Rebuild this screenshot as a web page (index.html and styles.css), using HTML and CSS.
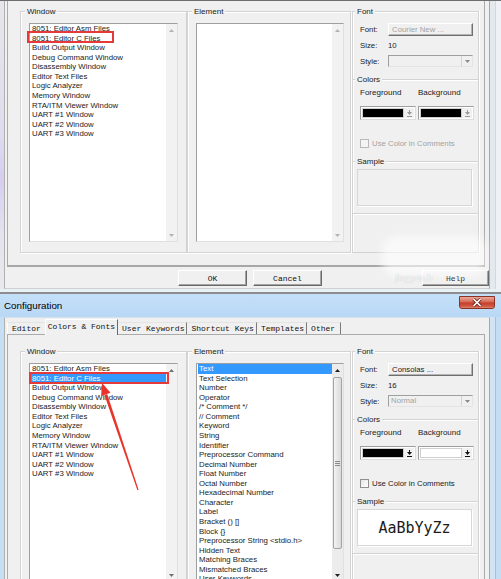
FILE: index.html
```html
<!DOCTYPE html>
<html>
<head>
<meta charset="utf-8">
<title>Configuration</title>
<link rel="stylesheet" href="styles.css">
</head>
<body>
<div class="screen">

  <section class="dlg-top">
    <div class="frame-l"></div>
    <div class="body">
      <div class="tabpage tabpage-top">
        <div class="cols">
          <div class="group">
            <div class="gtitle">Window</div>
            <div class="listbox">
              <div class="items">
                <div class="item">8051: Editor Asm Files</div>
                <div class="item">8051: Editor C Files</div>
                <div class="item">Build Output Window</div>
                <div class="item">Debug Command Window</div>
                <div class="item">Disassembly Window</div>
                <div class="item">Editor Text Files</div>
                <div class="item">Logic Analyzer</div>
                <div class="item">Memory Window</div>
                <div class="item">RTA/ITM Viewer Window</div>
                <div class="item">UART #1 Window</div>
                <div class="item">UART #2 Window</div>
                <div class="item">UART #3 Window</div>
              </div>
              <div class="vs dis">
                <div class="sbtn"><svg width="5" height="3" viewBox="0 0 5 3"><path d="M0 3L2.5 0L5 3Z"/></svg></div>
                <div class="track"></div>
                <div class="sbtn"><svg width="5" height="3" viewBox="0 0 5 3"><path d="M0 0H5L2.5 3Z"/></svg></div>
              </div>
            </div>
          </div>
          <div class="group group-el">
            <div class="gtitle">Element</div>
            <div class="listbox">
              <div class="items"></div>
              <div class="vs dis">
                <div class="sbtn"><svg width="5" height="3" viewBox="0 0 5 3"><path d="M0 3L2.5 0L5 3Z"/></svg></div>
                <div class="track"></div>
                <div class="sbtn"><svg width="5" height="3" viewBox="0 0 5 3"><path d="M0 0H5L2.5 3Z"/></svg></div>
              </div>
            </div>
          </div>
          <div class="fontcol">
            <div class="fsec">
              <div class="gtitle">Font</div>
              <div class="frows">
                <span>Font:</span><div class="fbtn dim">Courier New ...</div>
                <span>Size:</span><span>10</span>
                <span>Style:</span><div class="fcombo"><span class="fval"></span><span class="dd"><svg width="5" height="3" viewBox="0 0 5 3"><path d="M0 0H5L2.5 3Z"/></svg></span></div>
              </div>
            </div>
            <div class="fsec">
              <div class="gtitle">Colors</div>
              <div class="pair clabels"><span>Foreground</span><span>Background</span></div>
              <div class="pair ccombos">
                <div class="ccombo dis"><span class="swatch black"></span><span class="cdd"><svg width="5" height="7" viewBox="0 0 5 7"><path d="M2 0H3V2H5L2.5 5L0 2H2Z M0 6H5V7H0Z"/></svg></span></div>
                <div class="ccombo dis"><span class="swatch black"></span><span class="cdd"><svg width="5" height="7" viewBox="0 0 5 7"><path d="M2 0H3V2H5L2.5 5L0 2H2Z M0 6H5V7H0Z"/></svg></span></div>
              </div>
              <div class="check dis"><span class="cbox"></span><span>Use Color in Comments</span></div>
            </div>
            <div class="fsec">
              <div class="gtitle">Sample</div>
              <div class="sample"></div>
            </div>
            <div class="fsec end"></div>
          </div>
        </div>
      </div>
      <div class="buttons">
        <div class="btn">OK</div>
        <div class="btn">Cancel</div>
        <div class="btn help">Help</div>
      </div>
    </div>
    <div class="frame-r"></div>
  </section>

  <div class="sep"></div>

  <section class="dlg-bottom">
    <div class="titlebar">
      <span class="ttl">Configuration</span>
      <span class="close"><svg width="12" height="9" viewBox="0 0 12 9"><path d="M2.5 1L9.5 8M9.5 1L2.5 8" stroke="#6b2419" stroke-width="3.2"/><path d="M2.5 1L9.5 8M9.5 1L2.5 8" stroke="#fff" stroke-width="1.7"/></svg></span>
    </div>
    <div class="dlg-row">
      <div class="frame-l"></div>
      <div class="body">
        <div class="tabs">
          <span class="tab first">Editor</span>
          <span class="tab sel">Colors &amp; Fonts</span>
          <span class="tab">User Keywords</span>
          <span class="tab">Shortcut Keys</span>
          <span class="tab">Templates</span>
          <span class="tab last">Other</span>
        </div>
        <div class="tabpage tabpage-main">
          <div class="cols">
            <div class="group">
              <div class="gtitle">Window</div>
              <div class="listbox">
                <div class="items">
                  <div class="item">8051: Editor Asm Files</div>
                  <div class="item sel">8051: Editor C Files</div>
                  <div class="item">Build Output Window</div>
                  <div class="item">Debug Command Window</div>
                  <div class="item">Disassembly Window</div>
                  <div class="item">Editor Text Files</div>
                  <div class="item">Logic Analyzer</div>
                  <div class="item">Memory Window</div>
                  <div class="item">RTA/ITM Viewer Window</div>
                  <div class="item">UART #1 Window</div>
                  <div class="item">UART #2 Window</div>
                  <div class="item">UART #3 Window</div>
                </div>
                <div class="vs mid">
                  <div class="sbtn"><svg width="5" height="3" viewBox="0 0 5 3"><path d="M0 3L2.5 0L5 3Z"/></svg></div>
                  <div class="track"></div>
                  <div class="sbtn"><svg width="5" height="3" viewBox="0 0 5 3"><path d="M0 0H5L2.5 3Z"/></svg></div>
                </div>
              </div>
            </div>
            <div class="group group-el">
              <div class="gtitle">Element</div>
              <div class="listbox">
                <div class="items">
                  <div class="item sel">Text</div>
                  <div class="item">Text Selection</div>
                  <div class="item">Number</div>
                  <div class="item">Operator</div>
                  <div class="item">/* Comment */</div>
                  <div class="item">// Comment</div>
                  <div class="item">Keyword</div>
                  <div class="item">String</div>
                  <div class="item">Identifier</div>
                  <div class="item">Preprocessor Command</div>
                  <div class="item">Decimal Number</div>
                  <div class="item">Float Number</div>
                  <div class="item">Octal Number</div>
                  <div class="item">Hexadecimal Number</div>
                  <div class="item">Character</div>
                  <div class="item">Label</div>
                  <div class="item">Bracket () []</div>
                  <div class="item">Block {}</div>
                  <div class="item">Preprocessor String &lt;stdio.h&gt;</div>
                  <div class="item">Hidden Text</div>
                  <div class="item">Matching Braces</div>
                  <div class="item">Mismatched Braces</div>
                  <div class="item">User Keywords</div>
                </div>
                <div class="vs on">
                  <div class="sbtn"><svg width="5" height="3" viewBox="0 0 5 3"><path d="M0 3L2.5 0L5 3Z"/></svg></div>
                  <div class="track"><div class="thumb"><span class="grip"></span></div></div>
                  <div class="sbtn"><svg width="5" height="3" viewBox="0 0 5 3"><path d="M0 0H5L2.5 3Z"/></svg></div>
                </div>
              </div>
            </div>
            <div class="fontcol">
              <div class="fsec">
                <div class="gtitle">Font</div>
                <div class="frows">
                  <span>Font:</span><div class="fbtn">Consolas ...</div>
                  <span>Size:</span><span>16</span>
                  <span>Style:</span><div class="fcombo"><span class="fval dim">Normal</span><span class="dd"><svg width="5" height="3" viewBox="0 0 5 3"><path d="M0 0H5L2.5 3Z"/></svg></span></div>
                </div>
              </div>
              <div class="fsec">
                <div class="gtitle">Colors</div>
                <div class="pair clabels"><span>Foreground</span><span>Background</span></div>
                <div class="pair ccombos">
                  <div class="ccombo"><span class="swatch black"></span><span class="cdd"><svg width="5" height="7" viewBox="0 0 5 7"><path d="M2 0H3V2H5L2.5 5L0 2H2Z M0 6H5V7H0Z"/></svg></span></div>
                  <div class="ccombo"><span class="swatch white"></span><span class="cdd"><svg width="5" height="7" viewBox="0 0 5 7"><path d="M2 0H3V2H5L2.5 5L0 2H2Z M0 6H5V7H0Z"/></svg></span></div>
                </div>
                <div class="check"><span class="cbox"></span><span>Use Color in Comments</span></div>
              </div>
              <div class="fsec">
                <div class="gtitle">Sample</div>
                <div class="sample on">AaBbYyZz</div>
              </div>
              <div class="fsec end"></div>
            </div>
          </div>
        </div>
      </div>
      <div class="frame-r"></div>
    </div>
  </section>

  <div class="redbox rb1"></div>
  <div class="redbox rb2"></div>
  <svg class="annot" width="501" height="579" viewBox="0 0 501 579">
    <polygon points="102,383 110.5,392.8 101.1,396" fill="#e8352c"/>
    <polygon points="104.4,394.9 107.2,393.9 138.6,489.8 137.4,490.2" fill="#e8352c"/>
  </svg>
  <div class="wm"></div>
  <div class="wmtext">jingyan.b</div>
</div>
</body>
</html>
```

FILE: styles.css
```css
* { box-sizing: border-box; }
html, body { margin: 0; padding: 0; }
body {
  width: 501px;
  height: 579px;
  overflow: hidden;
  background: #f0f0f0;
  font-family: "Liberation Sans", Arial, sans-serif;
  font-size: 7.8px;
  color: #1b1b1b;
}
.screen {
  position: relative;
  width: 501px;
  height: 579px;
  overflow: hidden;
  display: flex;
  flex-direction: column;
}

/* ---------- dialog frames ---------- */
.dlg-top {
  flex: none;
  height: 289px;
  border-top: 1px solid #6e6e6e;
  display: flex;
}
.frame-l { width: 4px; flex: none; }
.frame-r { width: 11px; flex: none; }
.dlg-top .frame-l { background: linear-gradient(#e7e6ea, #e0dcef 45%, #d6cdef 62%, #e4e2ee 80%, #e9e9ec); }
.dlg-top .frame-r { background: linear-gradient(to right, #e4e9ed 0 5px, #ccd8e3 5px 6px, #eef2f6 6px); }
.body {
  width: 486px;
  flex: none;
  border-left: 1px solid #b0b0b0;
  border-right: 1px solid #a8a8a8;
  padding-left: 2px;
  background: #f0f0f0;
}
.dlg-top .body { border-bottom: 1px solid #cfcfcf; }

.sep {
  flex: none;
  height: 5px;
  background: linear-gradient(#e8f1f5 0 3px, #8d8d8d 3px 5px);
}

.dlg-bottom {
  flex: 1;
  min-height: 0;
  display: flex;
  flex-direction: column;
}
.titlebar {
  flex: none;
  height: 23px;
  padding-left: 4px;
  display: flex;
  justify-content: space-between;
  align-items: flex-start;
  background: linear-gradient(#c4e0f9, #b9d8f5);
}
.ttl { font-size: 9.8px; line-height: 23px; color: #000; }
.close {
  width: 36px;
  height: 13px;
  margin: 2px 6px 0 0;
  border: 1px solid #8a3024;
  border-radius: 0 0 3px 3px;
  background: linear-gradient(#eaa898, #d9705c 40%, #c43f2c 55%, #cf5a44 85%, #e08a72);
  display: flex;
  align-items: center;
  justify-content: center;
}
.dlg-row { flex: 1; min-height: 0; display: flex; }
.dlg-row .frame-l { background: #c7dff5; }
.dlg-row .frame-r { background: linear-gradient(to right, #d2e4f4 0 5px, #9fc2e4 5px 6px, #c5ddf3 6px); }
.dlg-row .body { border-top: 1px solid #d6e2ed; }

/* ---------- tabs ---------- */
.tabs {
  height: 16px;
  display: flex;
  align-items: flex-end;
  font-family: "Liberation Mono", "Courier New", monospace;
  font-size: 8px;
  color: #111;
}
.tab {
  height: 12px;
  line-height: 11px;
  padding: 0 2px 0 4px;
  border-top: 1px solid #e4e4e4;
  border-right: 1px solid #7a7a7a;
  white-space: nowrap;
}
.tab.first { border-left: 1px solid #ffffff; padding: 0 4px 0 4px; border-right: none; }
.tab.last { padding-right: 5px; }
.tab.sel {
  position: relative;
  z-index: 1;
  height: 16px;
  line-height: 13px;
  margin-bottom: -1px;
  padding: 0 2px;
  background: #f0f0f0;
  border-left: 1px solid #ffffff;
  border-top: 1px solid #ffffff;
  border-right: 1px solid #6a6a6a;
}

/* ---------- tab page ---------- */
.tabpage {
  width: 478px;
  padding-left: 12px;
  border-left: 1px solid #ababab;
  border-right: 1px solid #ababab;
}
.tabpage-top {
  padding-top: 10px;
  padding-bottom: 12px;
  border-bottom: 2px solid #a7a7a7;
}
.tabpage-main {
  border-top: 1px solid #ababab;
  padding-top: 16px;
}
.cols {
  display: grid;
  grid-template-columns: 167px 164px 128px;
  height: 242px;
}

/* ---------- group boxes ---------- */
.group {
  border: 1px solid #d3d3d3;
  box-shadow: inset 1px 1px 0 #ffffff, 1px 1px 0 #ffffff;
  padding: 0 0 10px 8px;
}
.gtitle {
  width: max-content;
  height: 11px;
  line-height: 11px;
  margin: -6px 0 0 -4px;
  padding: 0 2px;
  background: #f0f0f0;
  font-size: 8px;
}

/* ---------- listbox ---------- */
.listbox {
  margin-top: 6px;
  width: 149px;
  height: 219px;
  display: flex;
  background: #ffffff;
  border: 1px solid #9f9f9f;
  border-right-color: #e0e0e0;
  border-bottom-color: #e0e0e0;
  overflow: hidden;
}
.group-el .listbox { width: 148px; }
.items { flex: 1; min-width: 0; padding-left: 1px; }
.item {
  height: 9.57px;
  line-height: 9.57px;
  padding-left: 1px;
  white-space: nowrap;
  overflow: hidden;
}
.item.sel { background: #3399ff; color: #ffffff; }
.vs {
  width: 11px;
  flex: none;
  display: flex;
  flex-direction: column;
  background: #f2f2f2;
}
.vs.dis { color: #b3b3b3; }
.vs.mid { color: #707070; }
.vs.on { color: #1e1e1e; background: #ececec; }
.sbtn { height: 12px; flex: none; display: flex; align-items: center; justify-content: center; }
.sbtn svg { fill: currentColor; display: block; }
.track { flex: 1; }
.thumb {
  margin: 1px 1px 0 1px;
  height: 172px;
  border: 1px solid #a4a4a4;
  border-radius: 2px;
  background: linear-gradient(to right, #f3f3f3, #dadada);
  display: flex;
  align-items: center;
  justify-content: center;
}
.grip {
  width: 5px;
  height: 5px;
  background: repeating-linear-gradient(#8a8a8a 0 1px, transparent 1px 2px);
}

/* ---------- font column ---------- */
.fontcol {
  margin-left: 1px;
  border-left: 1px solid #d3d3d3;
  border-right: 1px solid #d3d3d3;
  box-shadow: inset 1px 0 0 #ffffff, 1px 0 0 #ffffff;
  display: flex;
  flex-direction: column;
}
.fsec {
  border-top: 1px solid #d3d3d3;
  box-shadow: inset 0 1px 0 #ffffff;
  padding-left: 7px;
}
.fsec .gtitle { margin-left: -5px; }
.fsec.end { flex: 1; border-bottom: 1px solid #d3d3d3; }
.frows {
  display: grid;
  grid-template-columns: 28px 85px;
  grid-auto-rows: 16px;
  align-items: center;
  margin: 4px 0 10px 0;
  font-size: 7.8px;
}
.dim { color: #a3a3a3; }
.fbtn {
  height: 13px;
  line-height: 11px;
  padding-left: 3px;
  border: 1px solid;
  border-color: #ffffff #6f6f6f #6f6f6f #ffffff;
  box-shadow: inset -1px -1px 0 #b4b4b4;
  white-space: nowrap;
}
.fcombo {
  height: 12px;
  display: flex;
  border: 1px solid #9f9f9f;
  border-right-color: #e4e4e4;
  border-bottom-color: #e4e4e4;
  background: #f0f0f0;
}
.fval { flex: 1; line-height: 10px; padding-left: 2px; }
.dd {
  width: 11px;
  display: flex;
  align-items: center;
  justify-content: center;
  border-left: 1px solid #d4d4d4;
  color: #8a8a8a;
}
.dd svg { fill: currentColor; display: block; }
.pair {
  display: grid;
  grid-template-columns: 56px 56px;
  column-gap: 2px;
}
.clabels { margin-top: 3px; height: 10px; line-height: 10px; font-size: 8px; }
.ccombos { margin-top: 8px; height: 14px; }
.ccombo {
  display: flex;
  padding: 1px;
  border: 1px solid #9f9f9f;
  border-right-color: #dcdcdc;
  border-bottom-color: #dcdcdc;
  background: #ffffff;
}
.swatch { width: 42px; flex: none; border: 1px solid #d0d0d0; }
.swatch.black { background: #000000; }
.swatch.white { background: #ffffff; }
.cdd {
  flex: 1;
  display: flex;
  align-items: center;
  justify-content: center;
  background: #f0f0f0;
  color: #111;
}
.ccombo.dis .cdd { color: #9a9a9a; }
.cdd svg { fill: currentColor; display: block; }
.check {
  margin: 18px 0 12px 0;
  height: 11px;
  display: flex;
  align-items: center;
  gap: 3px;
}
.check.dis { color: #a3a3a3; }
.cbox {
  width: 9px;
  height: 9px;
  flex: none;
  border: 1px solid #8e8f8f;
  background: linear-gradient(135deg, #e6e6e6, #ffffff);
}
.check.dis .cbox { border-color: #b9b9b9; background: #f4f4f4; }
.sample {
  margin: 2px 0 7px -3px;
  width: 115px;
  height: 37px;
  border: 1px solid #d6d6d6;
  box-shadow: 1px 1px 0 #ffffff;
  display: flex;
  align-items: center;
  justify-content: center;
}
.sample.on {
  background: #ffffff;
  font-family: "DejaVu Sans Mono", "Liberation Mono", monospace;
  font-size: 15px;
  color: #1b1b1b;
}

/* ---------- buttons ---------- */
.buttons {
  margin-top: 3px;
  padding-left: 171px;
  display: flex;
  gap: 6px;
}
.btn {
  width: 69px;
  height: 16px;
  display: flex;
  align-items: center;
  justify-content: center;
  border: 1px solid;
  border-color: #ffffff #696969 #696969 #ffffff;
  box-shadow: inset -1px -1px 0 #a3a3a3;
  font-family: "Liberation Mono", "Courier New", monospace;
  font-size: 8px;
  color: #111;
}
.btn.help { width: 67px; margin-left: 94px; }

/* ---------- annotations over the screenshot ---------- */
.redbox {
  position: absolute;
  border: 2px solid #e63a3a;
}
.rb1 { left: 27px; top: 31px; width: 87px; height: 12px; }
.rb2 { left: 29px; top: 372px; width: 140px; height: 12px; }
.annot { position: absolute; left: 0; top: 0; pointer-events: none; }
.wm {
  position: absolute;
  left: 382px;
  top: 236px;
  width: 104px;
  height: 40px;
  border-radius: 14px;
  background: rgba(255, 255, 255, 0.6);
  filter: blur(4px);
}
.wmtext {
  position: absolute;
  left: 395px;
  top: 272px;
  font-family: "Liberation Serif", serif;
  font-size: 10px;
  color: rgba(255, 255, 255, 0.95);
  text-shadow: 0 0 1px rgba(140, 140, 140, 0.6);
}
```
